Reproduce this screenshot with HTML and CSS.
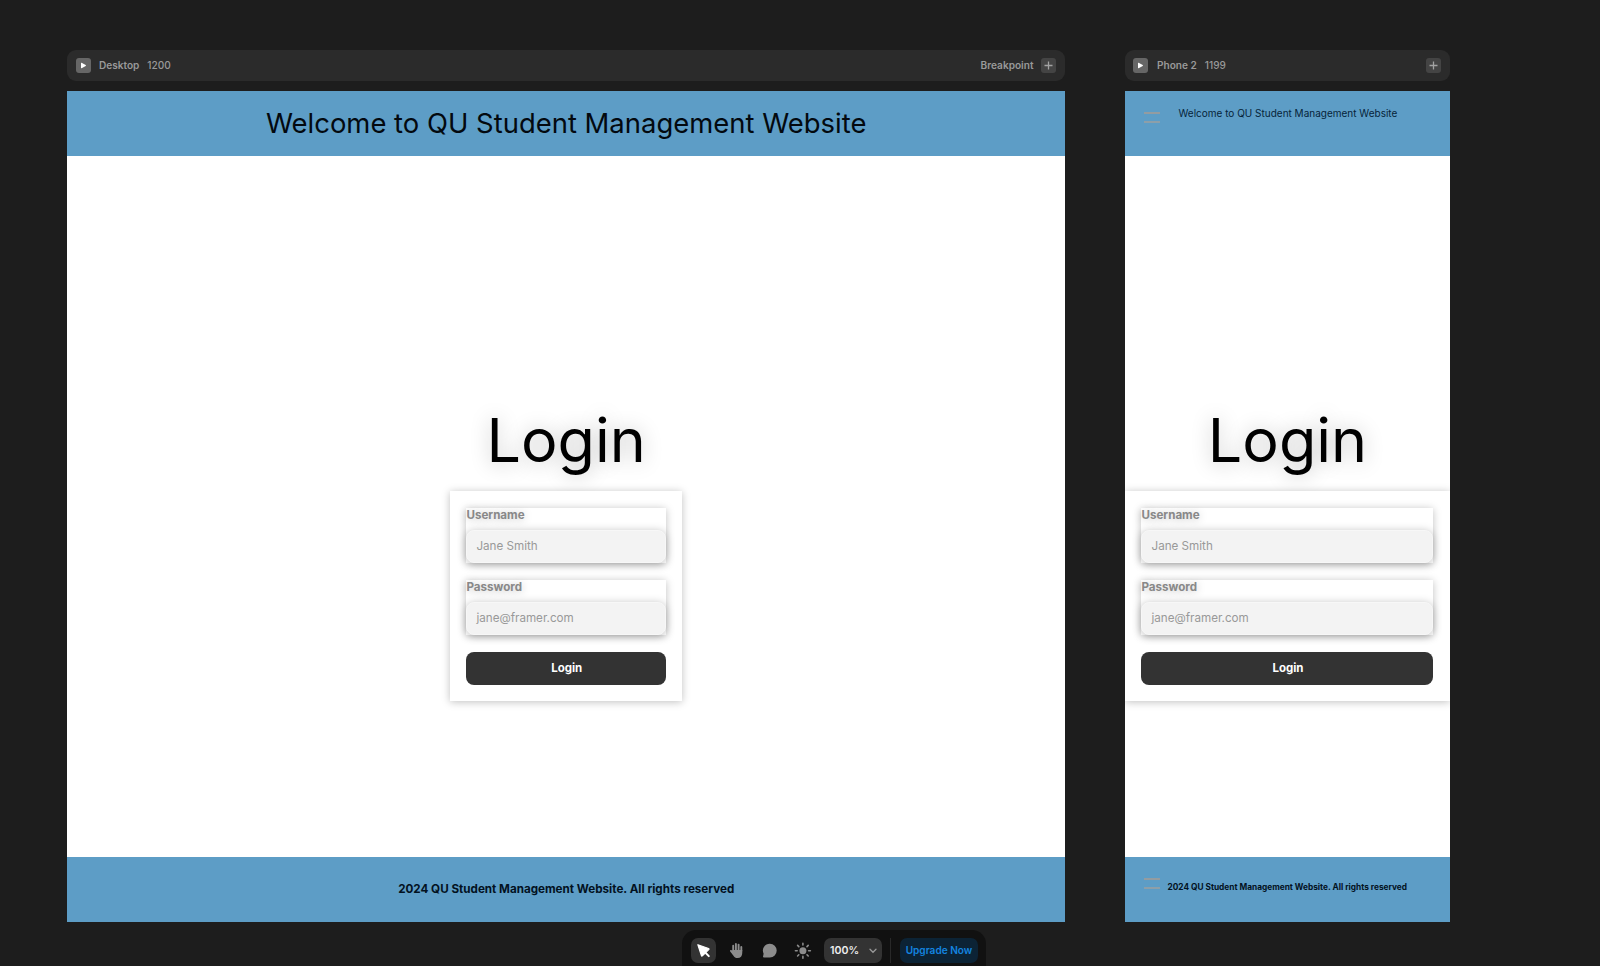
FILE: index.html
```html
<!DOCTYPE html>
<html lang="en">
<head>
<meta charset="utf-8">
<title>Canvas</title>
<link rel="stylesheet" href="styles.css">
</head>
<body>
<main class="canvas">
  <section class="frame desktop">
    <div class="bar">
      <span class="chip play"><svg width="15" height="15" viewBox="0 0 15 15"><path d="M5 5.2v4.6q0 .7.6.4l4.1-2.3q.6-.4 0-.8L5.600 4.800q-.6-.3-.6.4z" fill="#fff"/></svg></span>
      <span class="name">Desktop</span><span class="size">1200</span>
      <span class="bp">Breakpoint</span>
      <span class="chip add"><svg width="15" height="15" viewBox="0 0 15 15"><path d="M7.500 3.500v8M3.500 7.500h8" stroke="#a2a2a2" stroke-width="1.300"/></svg></span>
    </div>
    <div class="page">
      <header class="band"><h1 class="title">Welcome to QU Student Management Website</h1></header>
      <div class="body">
        <h2 class="login-title">Login</h2>
        <form class="card">
          <div class="field"><span class="label">Username</span><div class="input">Jane Smith</div></div>
          <div class="field"><span class="label">Password</span><div class="input">jane@framer.com</div></div>
          <div class="button">Login</div>
        </form>
      </div>
      <footer class="band"><p class="copy">2024 QU Student Management Website. All rights reserved</p></footer>
    </div>
  </section>
  <section class="frame phone">
    <div class="bar">
      <span class="chip play"><svg width="15" height="15" viewBox="0 0 15 15"><path d="M5 5.2v4.6q0 .7.6.4l4.1-2.3q.6-.4 0-.8L5.600 4.800q-.6-.3-.6.4z" fill="#fff"/></svg></span>
      <span class="name">Phone 2</span><span class="size">1199</span>
      <span class="chip add"><svg width="15" height="15" viewBox="0 0 15 15"><path d="M7.500 3.500v8M3.500 7.500h8" stroke="#a2a2a2" stroke-width="1.300"/></svg></span>
    </div>
    <div class="page">
      <header class="band"><span class="menu"></span><h1 class="title">Welcome to QU Student Management Website</h1></header>
      <div class="body">
        <h2 class="login-title">Login</h2>
        <form class="card">
          <div class="field"><span class="label">Username</span><div class="input">Jane Smith</div></div>
          <div class="field"><span class="label">Password</span><div class="input">jane@framer.com</div></div>
          <div class="button">Login</div>
        </form>
      </div>
      <footer class="band"><span class="menu"></span><p class="copy">2024 QU Student Management Website. All rights reserved</p></footer>
    </div>
  </section>
</main>
<nav class="toolbar">
  <span class="tool active"><svg width="25" height="25" viewBox="0 0 25 25"><path d="M6.900 6.700L10.400 17.600Q10.800 18.600 11.400 17.700L17.700 11.600Q18.500 10.900 17.600 10.500Z" fill="#fff" stroke="#fff" stroke-width="1.200" stroke-linejoin="round"/><path d="M14 14.200l3.800 3.900" stroke="#fff" stroke-width="2" stroke-linecap="round"/></svg></span>
  <span class="tool"><svg width="25" height="25" viewBox="0 0 25 25" fill="none" stroke="#8c8c8c" stroke-linecap="round"><path d="M9.200 13V7.800M11.900 12V6M14.600 12V6.600M17.300 13V9" stroke-width="1.900"/><path d="M8.250 12h10v3c0 3-1.700 5-4.600 5-2.100 0-3.300-.8-4.200-2.300L6.200 13.600c-.8-1.300.8-2.200 1.700-1.100l.6.7z" fill="#8c8c8c" stroke="none"/></svg></span>
  <span class="tool"><svg width="25" height="25" viewBox="0 0 25 25"><path d="M12.900 5.800a6.800 6.800 0 1 1 0 13.600H7q-1.300 0-.9-1.200l.5-2.500a6.800 6.800 0 0 1 6.300-9.900z" fill="#8c8c8c"/></svg></span>
  <span class="tool"><svg width="25" height="25" viewBox="0 0 25 25"><circle cx="12.900" cy="12.700" r="3.500" fill="#8c8c8c"/><path d="M12.900 5.200v1.800M12.900 18.400v1.800M5.400 12.700h1.800M18.600 12.700h1.800M7.600 7.400l1.200 1.200M17 16.800l1.200 1.200M7.600 18l1.200-1.200M17 8.600l1.200-1.200" stroke="#8c8c8c" stroke-width="1.600" stroke-linecap="round"/></svg></span>
  <span class="zoom">100%<svg width="8" height="6" viewBox="0 0 8 6"><path d="M1 1.300l3 3 3-3" fill="none" stroke="#999" stroke-width="1.300" stroke-linecap="round"/></svg></span>
  <span class="sep"></span>
  <span class="upgrade">Upgrade Now</span>
</nav>
</body>
</html>
```
FILE: styles.css
```css
* { box-sizing: border-box; }
body { margin: 0; background: #1d1d1d; font-family: Inter, "Liberation Sans", sans-serif; height: 966px; overflow: hidden; }
h1, h2, p { margin: 0; font-weight: 400; }
svg { display: block; }
.canvas { display: flex; gap: 60px; padding: 49.500px 0 0 67.400px; }
.frame { display: flex; flex-direction: column; gap: 10px; flex: none; }
.desktop { width: 997.600px; }
.phone { width: 325px; }
.bar { height: 31.500px; border-radius: 9px; background: #2b2b2b; display: flex; align-items: center; padding: 0 8.500px 0 8.500px; color: #999; font-size: 10.100px; font-weight: 600; line-height: 14px; white-space: nowrap; }
.chip { width: 15px; height: 15px; border-radius: 3px; flex: none; }
.play { background: #666; margin-right: 8px; }
.phone .play { margin-right: 8.500px; }
.add { background: #444; margin-left: auto; }
.size { margin-left: 8px; font-weight: 500; }
.bp { margin-left: auto; }
.bp + .add { margin-left: 8px; }
.page { height: 831px; background: #fff; display: flex; flex-direction: column; overflow: hidden; }
.band { height: 65px; flex: none; background: #5d9dc6; display: flex; align-items: center; justify-content: center; color: #03121f; white-space: nowrap; }
.title { font-size: 27.450px; line-height: 34px; margin-top: -1px; color: #03090f; }
.copy { font-size: 11.650px; font-weight: 700; line-height: 16px; margin-top: -1px; }
.phone .band { justify-content: flex-start; align-items: flex-start; padding-left: 19px; }
.menu { width: 16px; height: 11px; border-top: 2px solid #9d9c9b; border-bottom: 2px solid #96a0a5; opacity: .85; margin-top: 21px; flex: none; }
.phone .title { font-size: 10px; line-height: 14px; margin: 14.500px 0 0 18.500px; color: #06243a; }
.phone .copy { font-size: 8.300px; line-height: 12px; margin: 24px 0 0 7.500px; }
.body { flex: 1; display: flex; flex-direction: column; align-items: center; padding-top: 247px; }
.login-title { font-size: 61px; line-height: 74px; height: 88px; color: #000; text-shadow: 0 1px 20px rgba(0,0,0,.25); }
.card { width: 232.500px; height: 210px; padding: 17px 16.500px 16px; background: #fff; box-shadow: 0 1px 8px rgba(0,0,0,.25); display: flex; flex-direction: column; }
.phone .card { width: 325px; }
.field { height: 55px; margin-bottom: 17px; background: #fff; box-shadow: 0 1px 8px rgba(0,0,0,.25); display: flex; flex-direction: column; justify-content: space-between; }
.label { font-size: 11.600px; line-height: 14px; font-weight: 700; color: #888; text-shadow: 0 1px 8px rgba(0,0,0,.25); }
.input { height: 33px; background: #f3f3f3; border-radius: 8px; border: 1px solid #f7f7f7; padding-left: 9px; font-size: 11.650px; line-height: 30px; color: #999; box-shadow: 0 1px 8px rgba(0,0,0,.25); }
.button { height: 33px; border-radius: 8px; background: #333; color: #fff; font-size: 11.500px; font-weight: 700; line-height: 32px; text-align: center; padding-left: 1px; }
.toolbar { position: absolute; left: 682px; top: 930px; width: 304px; height: 50px; border-radius: 14px; background: #111; display: flex; gap: 8px; padding: 8px 8px 0 9px; }
.tool { width: 25px; height: 25px; border-radius: 7px; }
.active { background: #333; }
.zoom { margin-left: 1px; width: 58px; height: 25px; border-radius: 7px; background: #333; color: #eee; font-size: 10.600px; font-weight: 600; display: flex; align-items: center; justify-content: space-between; padding: 0 5px 0 6px; }
.sep { width: 1px; height: 25px; background: #292929; }
.upgrade { margin-left: 1px; width: 78px; height: 25px; border-radius: 7px; background: #0c2335; color: #1385e0; font-size: 10.100px; font-weight: 600; line-height: 24px; text-align: center; white-space: nowrap; }
```
